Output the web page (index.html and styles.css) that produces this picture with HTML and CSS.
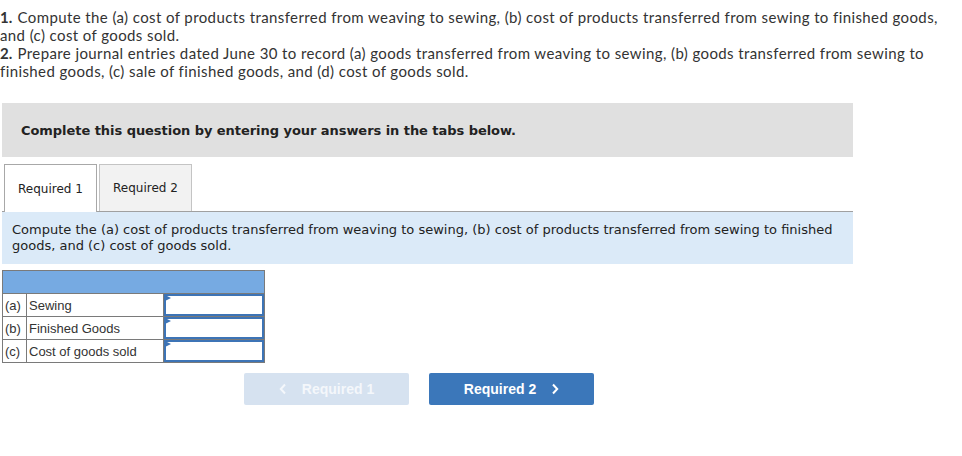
FILE: index.html
```html
<!DOCTYPE html>
<html>
<head>
<meta charset="utf-8">
<link rel="stylesheet" href="styles.css">
</head>
<body>
<div class="intro">
  <p><b>1.</b> Compute the (a) cost of products transferred from weaving to sewing, (b) cost of products transferred from sewing to finished goods, and (c) cost of goods sold.</p>
  <p><b>2.</b> Prepare journal entries dated June 30 to record (a) goods transferred from weaving to sewing, (b) goods transferred from sewing to finished goods, (c) sale of finished goods, and (d) cost of goods sold.</p>
</div>

<div class="notice">Complete this question by entering your answers in the tabs below.</div>

<div class="tabs">
  <div class="tab active">Required 1</div>
  <div class="tab">Required 2</div>
</div>

<div class="instruction">Compute the (a) cost of products transferred from weaving to sewing, (b) cost of products transferred from sewing to finished goods, and (c) cost of goods sold.</div>

<table class="answers">
  <tr class="head"><th colspan="3"></th></tr>
  <tr><td class="tag">(a)</td><td class="label">Sewing</td><td class="input"><span class="field"></span></td></tr>
  <tr><td class="tag">(b)</td><td class="label">Finished Goods</td><td class="input"><span class="field"></span></td></tr>
  <tr><td class="tag">(c)</td><td class="label">Cost of goods sold</td><td class="input"><span class="field"></span></td></tr>
</table>

<div class="nav">
  <button class="btn prev"><svg class="chev" width="8" height="12" viewBox="0 0 8 12"><path d="M6 1.5 L1.8 6 L6 10.5" fill="none" stroke="currentColor" stroke-width="2"/></svg>Required 1</button>
  <button class="btn next">Required 2<svg class="chev" width="8" height="12" viewBox="0 0 8 12"><path d="M2 1.5 L6.2 6 L2 10.5" fill="none" stroke="currentColor" stroke-width="2"/></svg></button>
</div>
</body>
</html>
```

FILE: styles.css
```css
html, body {
  margin: 0;
  padding: 0;
  background: #fff;
}

.intro {
  padding-top: 8px;
  font-family: Lato, "Open Sans", sans-serif;
  font-size: 15px;
  line-height: 18px;
  letter-spacing: 0.4px;
  color: #333;
}

.intro p {
  margin: 0;
}

.intro b {
  font-weight: 700;
  letter-spacing: 0;
  margin-right: 1px;
}

.notice {
  margin: 23px 0 0 2px;
  width: 832px;
  height: 54px;
  padding-left: 19px;
  background: #e0e0e0;
  display: flex;
  align-items: center;
  font-family: "DejaVu Sans", Verdana, sans-serif;
  font-weight: bold;
  font-size: 13px;
  letter-spacing: -0.05px;
  color: #222;
}

.tabs {
  margin: 7px 0 0 2px;
  width: 851px;
  display: flex;
  align-items: flex-end;
  gap: 2px;
  border-bottom: 1px solid #a0a0a0;
  padding-left: 2px;
  box-sizing: border-box;
}

.tab {
  font-family: "DejaVu Sans", Verdana, sans-serif;
  font-size: 12px;
  color: #222;
  height: 46px;
  width: 91px;
  display: flex;
  align-items: center;
  justify-content: center;
  border: 1px solid #c4c4c4;
  border-bottom: none;
  background: #f2f2f2;
}

.tab.active {
  background: #fff;
  height: 47px;
  margin-bottom: -1px;
  border-color: #a8a8a8;
}

.instruction {
  margin-left: 2px;
  width: 833px;
  padding: 10px 8px 10px 10px;
  background: #dbeaf8;
  font-family: "DejaVu Sans", Verdana, sans-serif;
  font-size: 13px;
  line-height: 16px;
  color: #222;
}

.answers {
  margin: 6px 0 0 2px;
  border-collapse: collapse;
  font-family: "Liberation Sans", Arial, sans-serif;
  font-size: 13px;
  color: #333;
}

.answers td, .answers th {
  border: 1px solid #7a7a7a;
  padding: 0;
  height: 22px;
}

.answers .head th {
  background: #76aae2;
}

.answers .tag {
  width: 21px;
  padding-left: 2px;
}

.answers .label {
  width: 134px;
  padding-left: 2px;
}

.answers .input {
  width: 100px;
  vertical-align: top;
}

.answers .field {
  display: block;
  height: 18px;
  border: 2px solid #3d74b6;
  background: #fff;
  position: relative;
}

.answers .field::before {
  content: "";
  position: absolute;
  left: -1px;
  top: -1px;
  border-left: 6px solid #3d74b6;
  border-top: 3px solid transparent;
  border-bottom: 3px solid transparent;
}

.nav {
  display: flex;
  gap: 20px;
  margin-top: 10px;
  padding-left: 244px;
}

.btn {
  width: 165px;
  height: 32px;
  border: none;
  border-radius: 2px;
  font-family: "Liberation Sans", Arial, sans-serif;
  font-weight: bold;
  font-size: 14px;
  color: #fff;
  display: flex;
  align-items: center;
  justify-content: center;
  padding: 0;
}

.prev {
  background: #d6e2f0;
  color: #f4f7fb;
}

.prev .chev {
  margin-right: 15px;
}

.next {
  background: #3b77ba;
}

.next .chev {
  margin-left: 15px;
}
```
